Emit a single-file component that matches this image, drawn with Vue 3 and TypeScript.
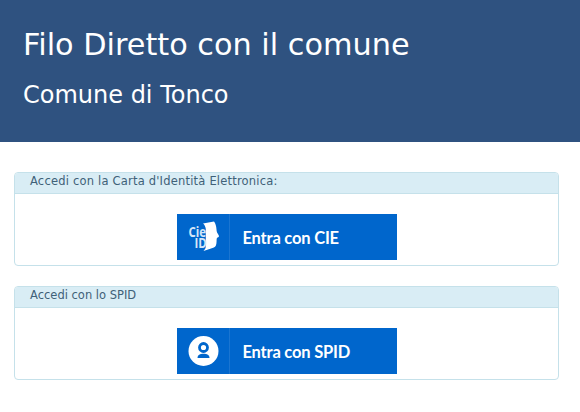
<script setup lang="ts">
const title: string = 'Filo Diretto con il comune'
const subtitle: string = 'Comune di Tonco'
</script>

<template>
  <div class="page">
    <header class="top">
      <h1>{{ title }}</h1>
      <h2>{{ subtitle }}</h2>
    </header>
    <main class="content">
      <section class="card">
        <div class="card-head wide">Accedi con la Carta d'Identità Elettronica:</div>
        <div class="card-body">
          <a class="btn">
            <span class="btn-icon">
              <svg width="32" height="32" viewBox="0 0 32 32">
                <path d="M15 2.5 L26 0.5 C27.5 2.5 28.3 5 28.5 8.5 C28.6 10.5 29 11.5 30 13 L31 15 C31 16 29.6 16.4 29 17 C28.4 17.8 28.8 20 28.4 22.5 C28 25.5 26.5 26.5 24.5 27 L15.5 30 C17 28.5 17.8 27 17.8 25 L17.8 8 C17.6 5.8 16.6 3.8 15 2.5 Z" fill="#fff"/>
                <text transform="translate(0.5 15.5) scale(0.85 1)" class="cie-t">Cie</text>
                <text transform="translate(6.5 27) scale(0.85 1)" class="cie-t">ID</text>
              </svg>
            </span>
            <span class="btn-text">Entra con CIE</span>
          </a>
        </div>
      </section>
      <section class="card">
        <div class="card-head">Accedi con lo SPID</div>
        <div class="card-body">
          <a class="btn">
            <span class="btn-icon">
              <svg width="32" height="32" viewBox="0 0 32 32">
                <circle cx="15.5" cy="16" r="15" fill="#fff"/>
                <circle cx="15.5" cy="12.5" r="4" fill="none" stroke="#0066cc" stroke-width="2.8"/>
                <path d="M9.5 23 C9.5 20 12 18.8 15.5 18.8 C19 18.8 21.5 20 21.5 23 Z" fill="#0066cc"/>
              </svg>
            </span>
            <span class="btn-text">Entra con SPID</span>
          </a>
        </div>
      </section>
    </main>
  </div>
</template>

<style>
html, body { margin: 0; background: #fff; }
</style>

<style scoped>
.page {
  width: 580px;
  height: 412px;
  overflow: hidden;
  font-family: "DejaVu Sans", Verdana, sans-serif;
}
.top {
  background: #2f5280;
  color: #fff;
  height: 142px;
  box-sizing: border-box;
  padding: 26px 23px 0;
}
h1 {
  margin: 0;
  font-size: 30.3px;
  line-height: 38px;
  font-weight: 400;
}
h2 {
  margin: 17px 0 0;
  font-size: 24px;
  line-height: 28px;
  font-weight: 400;
}
.content {
  padding: 30px 21px 0 14px;
  display: flex;
  flex-direction: column;
  gap: 20px;
}
.card {
  height: 94px;
  box-sizing: border-box;
  border: 1px solid #c5e1ea;
  border-radius: 4px;
  overflow: hidden;
  background: #fff;
}
.card-head {
  height: 21px;
  box-sizing: border-box;
  background: #d9edf5;
  border-bottom: 1px solid #c5e1ea;
  padding-left: 15px;
  color: #3f6178;
  font-size: 11.5px;
  line-height: 16px;
}
.wide { letter-spacing: 0.2px; }
.card-body {
  display: flex;
  justify-content: center;
  padding-top: 20px;
}
.btn {
  width: 220px;
  height: 46px;
  background: #0066cc;
  display: flex;
  align-items: center;
}
.btn-icon {
  width: 53px;
  height: 46px;
  box-sizing: border-box;
  border-right: 1px solid #1a75d1;
  padding-left: 11px;
  display: flex;
  align-items: center;
}
.btn-icon svg { display: block; }
.cie-t {
  font-family: "Open Sans", sans-serif;
  font-size: 13.5px;
  font-weight: 700;
  fill: #d5e6f8;
}
.btn-text {
  margin-left: 13px;
  padding-top: 1px;
  color: #fff;
  font-family: Lato, sans-serif;
  font-weight: 700;
  font-size: 16.5px;
  letter-spacing: -0.2px;
}
</style>
